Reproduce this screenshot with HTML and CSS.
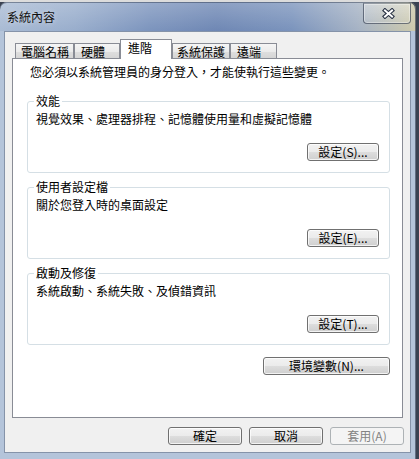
FILE: index.html
```html
<!DOCTYPE html>
<html lang="zh-Hant">
<head>
<meta charset="utf-8">
<title>系統內容</title>
<link rel="stylesheet" href="styles.css">
</head>
<body>
<div class="window">
  <div class="titlebar">
    <span class="title">系統內容</span>
    <button class="close" aria-label="關閉">
      <svg width="13" height="11" viewBox="0 0 13 11" aria-hidden="true">
        <path d="M3 2.5 L10 8.5 M10 2.5 L3 8.5" stroke="#2a3345" stroke-width="4.2" stroke-linecap="square" fill="none"/>
        <path d="M3 2.5 L10 8.5 M10 2.5 L3 8.5" stroke="#ffffff" stroke-width="2" stroke-linecap="square" fill="none"/>
      </svg>
    </button>
  </div>
  <div class="client">
    <div class="tabs">
      <div class="tab tab-computer">電腦名稱</div>
      <div class="tab tab-hardware">硬體</div>
      <div class="tab tab-advanced is-selected">進階</div>
      <div class="tab tab-protection">系統保護</div>
      <div class="tab tab-remote">遠端</div>
    </div>
    <div class="panel">
      <p class="notice">您必須以系統管理員的身分登入，才能使執行這些變更。</p>
      <fieldset class="group">
        <legend>效能</legend>
        <p class="desc">視覺效果、處理器排程、記憶體使用量和虛擬記憶體</p>
        <div class="group-actions"><button class="btn btn-settings">設定(S)...</button></div>
      </fieldset>
      <fieldset class="group">
        <legend>使用者設定檔</legend>
        <p class="desc">關於您登入時的桌面設定</p>
        <div class="group-actions"><button class="btn btn-settings">設定(E)...</button></div>
      </fieldset>
      <fieldset class="group">
        <legend>啟動及修復</legend>
        <p class="desc">系統啟動、系統失敗、及偵錯資訊</p>
        <div class="group-actions"><button class="btn btn-settings">設定(T)...</button></div>
      </fieldset>
      <div class="env-row"><button class="btn btn-env">環境變數(N)...</button></div>
    </div>
    <div class="footer">
      <button class="btn btn-dialog">確定</button>
      <button class="btn btn-dialog">取消</button>
      <button class="btn btn-dialog" disabled>套用(A)</button>
    </div>
  </div>
</div>
</body>
</html>
```
FILE: styles.css
```css
* { box-sizing: border-box; }

html, body {
  margin: 0;
  padding: 0;
}

body {
  width: 419px;
  height: 459px;
  overflow: hidden;
  background: linear-gradient(180deg, #dcdcdc 0, #dcdcdc 2px, #3a4252 2px, #3a4252 100%);
  font-family: "Noto Sans CJK TC", "Noto Sans", sans-serif;
  font-size: 12px;
  color: #000;
}

.window {
  width: 416px;
  height: 457px;
  margin-top: 2px;
  padding: 0 5px 6px 4px;
  display: flex;
  flex-direction: column;
  border-radius: 7px 7px 0 0;
  background:
    linear-gradient(180deg, rgba(255,255,255,0.22) 0, rgba(255,255,255,0) 29px) top / 100% 29px no-repeat,
    linear-gradient(90deg, #a9bbd4 0%, #98adcc 18%, #7c94bd 36%, #6e87b4 52%, #7a93bc 70%, #a5b2c4 86%, #cdc9ab 100%) top / 100% 29px no-repeat,
    #b4c4da;
  box-shadow: inset -1px 0 0 rgba(30,40,60,0.55), inset 0 1px 0 rgba(40,50,70,0.45);
}

.titlebar {
  height: 29px;
  flex: none;
  display: flex;
  justify-content: space-between;
  align-items: flex-start;
}

.title {
  padding: 7px 0 0 3px;
  line-height: 16px;
  font-size: 12px;
  color: #111;
  text-shadow: 0 0 5px rgba(255,255,255,0.55);
}

.close {
  margin: 1px 0 0 0;
  width: 48px;
  height: 21px;
  padding: 0 0 0 3px;
  display: flex;
  align-items: center;
  justify-content: center;
  border: 1px solid rgba(35,45,65,0.6);
  border-top-color: rgba(35,45,65,0.3);
  border-radius: 0 0 4px 4px;
  background: linear-gradient(180deg, rgba(255,255,255,0.28), rgba(255,255,255,0.08));
  box-shadow: inset 0 0 0 1px rgba(255,255,255,0.35);
}

.client {
  flex: 1;
  display: flex;
  flex-direction: column;
  padding: 7px 7px 7px 7px;
  background: #f0f0f0;
  border: 1px solid #8593a9;
}

.tabs {
  flex: none;
  display: flex;
  align-items: flex-end;
  height: 20px;
  margin-bottom: -1px;
  padding-left: 3px;
}

.tab {
  flex: none;
  height: 16px;
  padding-left: 5px;
  line-height: 15px;
  white-space: nowrap;
  border: 1px solid #898c95;
  border-bottom: none;
  background: linear-gradient(180deg, #f5f5f5 0%, #ebebeb 50%, #dedede 52%, #d4d4d4 100%);
}

.tab-computer { width: 59px; }
.tab-hardware { width: 46px; padding-left: 6px; }
.tab-advanced { width: 52px; }
.tab-protection { width: 58px; padding-left: 4px; }
.tab-remote { width: 47px; padding-left: 6px; }

.tab.is-selected {
  position: relative;
  z-index: 1;
  height: 20px;
  padding-left: 7px;
  line-height: 16px;
  background: #fff;
}

.panel {
  flex: 1;
  background: #fff;
  border: 1px solid #898c95;
  padding-top: 5px;
}

.notice {
  margin: 0 0 0 17px;
  line-height: 16px;
}

.group {
  margin: 13px 12px 0 14px;
  padding: 2px 10px 11px 8px;
  min-width: 0;
  border: 1px solid #d5dfe5;
  border-radius: 3px;
}

.group + .group {
  margin-top: 6px;
}

.group legend {
  padding: 0 2px;
  margin-left: -2px;
  line-height: 16px;
}

.desc {
  margin: 0;
  line-height: 16px;
}

.group-actions {
  display: flex;
  justify-content: flex-end;
  margin-top: 16px;
}

.env-row {
  display: flex;
  justify-content: flex-end;
  margin: 12px 12px 0 0;
}

.btn {
  height: 18px;
  padding: 0;
  font-family: inherit;
  font-size: 12px;
  line-height: 16px;
  color: #000;
  text-align: center;
  border: 1px solid #707070;
  border-radius: 3px;
  background: linear-gradient(180deg, #f2f2f2 0%, #ebebeb 50%, #dddddd 51%, #cfcfcf 100%);
  box-shadow: inset 0 0 0 1px rgba(255,255,255,0.75);
}

.btn-settings { width: 72px; }
.btn-env { width: 127px; }
.btn-dialog { width: 74px; }

.btn:disabled {
  color: #838383;
  border-color: #adb2b5;
  background: #f4f4f4;
  box-shadow: none;
}

.footer {
  flex: none;
  display: flex;
  justify-content: flex-end;
  gap: 7px;
  margin: 9px -1px 0 0;
}
```
